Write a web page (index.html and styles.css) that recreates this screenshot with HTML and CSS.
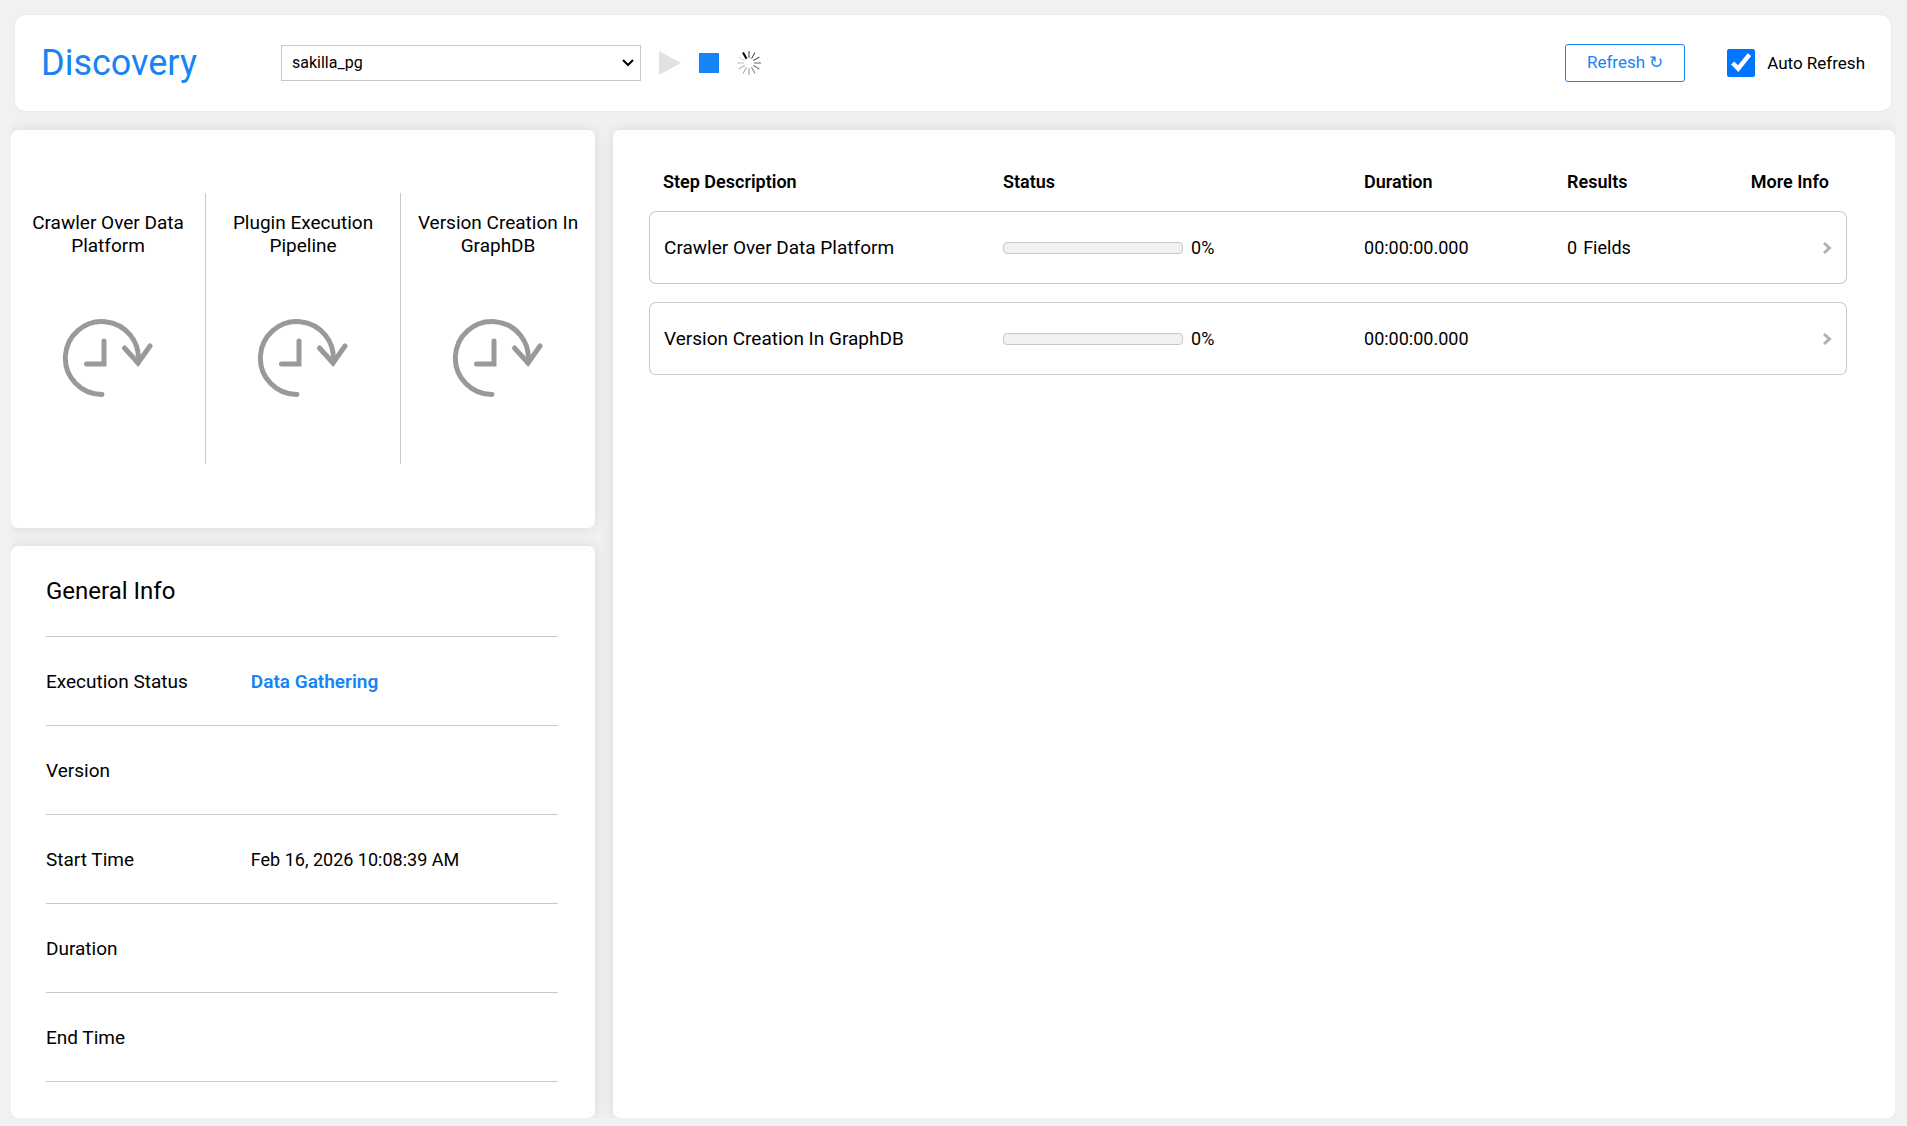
FILE: index.html
```html
<!DOCTYPE html>
<html lang="en">

<head>
    <meta charset="UTF-8">
    <meta name="viewport" content="width=device-width, initial-scale=1.0">
    <title>Discovery</title>
    <link rel="stylesheet" href="styles.css">
</head>

<body>
    <svg class="sprite" aria-hidden="true">
        <symbol id="pending" viewBox="0 0 92 80">
            <path d="M40 76.500 A36.500 36.500 0 1 1 76 45" />
            <path d="M62.500 30 L76 45 L88 28" />
            <path d="M42 23 V46 H24.500" />
        </symbol>
        <symbol id="chevron" viewBox="0 0 10 14">
            <path d="M2 2 L7.500 7 L2 12" />
        </symbol>
    </svg>

    <header class="header">
        <h1 class="title">Discovery</h1>
        <select class="source" aria-label="Data source">
            <option>sakilla_pg</option>
        </select>
        <div class="controls">
            <button class="play" type="button" aria-label="Start" disabled></button>
            <button class="stop" type="button" aria-label="Stop"></button>
            <svg class="spinner" viewBox="-12 -12 24 24" aria-hidden="true">
                <path d="M0 -5V-12" opacity=".75" />
                <path d="M0 -5V-12" opacity=".7" transform="rotate(30)" />
                <path d="M0 -5V-12" opacity=".65" transform="rotate(60)" />
                <path d="M0 -5V-12" opacity=".6" transform="rotate(90)" />
                <path d="M0 -5V-12" opacity=".55" transform="rotate(120)" />
                <path d="M0 -5V-12" opacity=".5" transform="rotate(150)" />
                <path d="M0 -5V-12" opacity=".4" transform="rotate(180)" />
                <path d="M0 -5V-12" opacity=".35" transform="rotate(210)" />
                <path d="M0 -5V-12" opacity=".3" transform="rotate(240)" />
                <path d="M0 -5V-12" opacity=".25" transform="rotate(270)" />
                <path d="M0 -5V-12" opacity=".15" transform="rotate(300)" />
                <path d="M0 -5V-12" stroke-width="2" transform="rotate(330)" />
            </svg>
        </div>
        <button class="refresh" type="button">Refresh ↻</button>
        <label class="auto-refresh">
            <input type="checkbox" checked>
            Auto Refresh
        </label>
    </header>

    <main class="main">
        <div class="side">
            <section class="card pipeline">
                <div class="stage">
                    <p>Crawler Over Data Platform</p>
                    <svg class="stage-icon"><use href="#pending" /></svg>
                </div>
                <div class="stage">
                    <p>Plugin Execution Pipeline</p>
                    <svg class="stage-icon"><use href="#pending" /></svg>
                </div>
                <div class="stage">
                    <p>Version Creation In GraphDB</p>
                    <svg class="stage-icon"><use href="#pending" /></svg>
                </div>
            </section>

            <section class="card info">
                <h2>General Info</h2>
                <dl>
                    <div class="info-row">
                        <dt>Execution Status</dt>
                        <dd class="running">Data Gathering</dd>
                    </div>
                    <div class="info-row">
                        <dt>Version</dt>
                        <dd></dd>
                    </div>
                    <div class="info-row">
                        <dt>Start Time</dt>
                        <dd>Feb 16, 2026 10:08:39 AM</dd>
                    </div>
                    <div class="info-row">
                        <dt>Duration</dt>
                        <dd></dd>
                    </div>
                    <div class="info-row">
                        <dt>End Time</dt>
                        <dd></dd>
                    </div>
                </dl>
            </section>
        </div>

        <section class="card details">
            <table class="steps">
                <thead>
                    <tr>
                        <th class="col-step">Step Description</th>
                        <th class="col-status">Status</th>
                        <th class="col-duration">Duration</th>
                        <th class="col-results">Results</th>
                        <th class="col-more">More Info</th>
                    </tr>
                </thead>
                <tbody>
                    <tr>
                        <td>Crawler Over Data Platform</td>
                        <td>
                            <div class="status">
                                <div class="bar"></div>
                                <span>0%</span>
                            </div>
                        </td>
                        <td>00:00:00.000</td>
                        <td><span class="count">0</span>Fields</td>
                        <td>
                            <button class="more" type="button" aria-label="More info">
                                <svg><use href="#chevron" /></svg>
                            </button>
                        </td>
                    </tr>
                    <tr>
                        <td>Version Creation In GraphDB</td>
                        <td>
                            <div class="status">
                                <div class="bar"></div>
                                <span>0%</span>
                            </div>
                        </td>
                        <td>00:00:00.000</td>
                        <td></td>
                        <td>
                            <button class="more" type="button" aria-label="More info">
                                <svg><use href="#chevron" /></svg>
                            </button>
                        </td>
                    </tr>
                </tbody>
            </table>
        </section>
    </main>
</body>

</html>
```
FILE: styles.css
```css
* {
    box-sizing: border-box;
}

body {
    margin: 0;
    min-height: 100vh;
    padding: 15px 12px 8px 11px;
    display: flex;
    flex-direction: column;
    background: #f1f1f1;
    color: #000;
    font-family: Roboto, "Liberation Sans", sans-serif;
    font-size: 18px;
    line-height: 23px;
}

h1,
h2,
p,
dl,
dd {
    margin: 0;
    font-weight: 400;
}

button,
select {
    font-family: inherit;
}

.sprite {
    position: absolute;
    width: 0;
    height: 0;
}

/* header */
.header {
    display: flex;
    align-items: center;
    height: 96px;
    margin: 0 4px;
    padding: 0 26px;
    background: #fff;
    border-radius: 10px;
    box-shadow: 0 0 2px rgba(0, 0, 0, 0.1);
}

.title {
    width: 240px;
    color: #1684f7;
    font-size: 36px;
    line-height: 42px;
}

.source {
    width: 360px;
    height: 36px;
    padding: 0 10px 2px;
    border: 1px solid #c8c8c8;
    border-radius: 0;
    appearance: none;
    background: #fff url("data:image/svg+xml,%3Csvg xmlns='http://www.w3.org/2000/svg' width='14' height='8'%3E%3Cpath d='M2 1L7 6L12 1' fill='none' stroke='%23000' stroke-width='2'/%3E%3C/svg%3E") no-repeat right 5px center;
    color: #000;
    font-size: 16px;
}

.controls {
    display: flex;
    align-items: center;
    gap: 18px;
    margin-left: 18px;
}

.play,
.stop {
    padding: 0;
    border: 0;
}

.play {
    width: 22px;
    height: 24px;
    background: #e2e2e2;
    clip-path: polygon(0 0, 100% 50%, 0 100%);
}

.stop {
    width: 20px;
    height: 20px;
    background: #1684f7;
}

.spinner {
    width: 24px;
    height: 24px;
    stroke: #000;
    stroke-width: 1;
}

.refresh {
    width: 120px;
    height: 38px;
    margin-left: auto;
    padding: 0 0 2px;
    border: 1px solid #1684f7;
    border-radius: 3px;
    background: #fff;
    color: #1684f7;
    font-size: 17px;
}

.auto-refresh {
    display: flex;
    align-items: center;
    gap: 12px;
    margin-left: 42px;
    font-size: 17px;
}

.auto-refresh input {
    width: 28px;
    height: 28px;
    margin: 0;
}

/* main area */
.main {
    flex: 1;
    display: flex;
    gap: 18px;
    padding-top: 19px;
    overflow: hidden;
}

.side {
    width: 31%;
    display: flex;
    flex-direction: column;
    gap: 18px;
}

.card {
    background: #fff;
    border-radius: 7px;
    box-shadow: 0 0 14px rgba(0, 0, 0, 0.1);
}

.pipeline {
    flex: 1;
    display: flex;
    padding: 63px 0 64px;
}

.stage {
    flex: 1;
    display: flex;
    flex-direction: column;
    align-items: center;
    padding: 18px 12px 0;
    font-size: 19px;
    text-align: center;
}

.stage + .stage {
    border-left: 1px solid #c8c8c8;
}

.stage-icon {
    width: 92px;
    height: 80px;
    margin-top: 61px;
    fill: none;
    stroke: #999;
    stroke-width: 5;
    stroke-linecap: round;
}

.info {
    padding: 0 37px 36px 35px;
}

.info h2 {
    padding: 33px 0 32px;
    border-bottom: 1px solid #c8c8c8;
    font-size: 24px;
    line-height: 25px;
}

.info-row {
    display: flex;
    align-items: center;
    height: 89px;
    border-bottom: 1px solid #c8c8c8;
}

.info-row dt {
    width: 40%;
    font-size: 19px;
}

.info-row .running {
    color: #1684f7;
    font-size: 19px;
    font-weight: 600;
}

/* steps table */
.details {
    flex: 1;
    padding: 40px 48px 18px 36px;
}

.steps {
    width: 100%;
    table-layout: fixed;
    border-collapse: separate;
    border-spacing: 0 18px;
    margin-top: -18px;
}

.steps th {
    padding: 0;
    text-align: left;
    font-weight: 600;
}

.steps td {
    height: 73px;
    padding: 0;
    border: solid #c8c8c8;
    border-width: 1px 0;
}

.steps th:first-child,
.steps td:first-child {
    padding-left: 14px;
}

.steps td:first-child {
    border-left-width: 1px;
    border-radius: 7px 0 0 7px;
    font-size: 19px;
}

.steps td:last-child {
    padding-right: 14px;
    border-right-width: 1px;
    border-radius: 0 7px 7px 0;
    text-align: right;
}

.steps .col-step {
    width: 354px;
}

.steps .col-status {
    width: 361px;
}

.steps .col-duration {
    width: 203px;
}

.steps .col-more {
    padding-right: 18px;
    text-align: right;
}

.status {
    display: flex;
    align-items: center;
    gap: 8px;
}

.bar {
    width: 180px;
    height: 12px;
    border: 1px solid #c8c8c8;
    border-radius: 4px;
    background: #f1f1f1;
}

.count {
    margin-right: 6px;
}

.more {
    display: block;
    margin-left: auto;
    padding: 0;
    border: 0;
    background: none;
}

.more svg {
    display: block;
    width: 10px;
    height: 14px;
    fill: none;
    stroke: #b0b0b0;
    stroke-width: 3;
}
```
